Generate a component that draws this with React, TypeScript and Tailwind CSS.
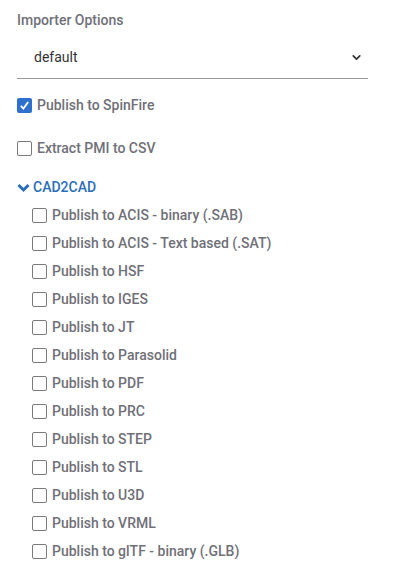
import { ChevronDown } from "lucide-react";

const formats = [
  "Publish to ACIS - binary (.SAB)",
  "Publish to ACIS - Text based (.SAT)",
  "Publish to HSF",
  "Publish to IGES",
  "Publish to JT",
  "Publish to Parasolid",
  "Publish to PDF",
  "Publish to PRC",
  "Publish to STEP",
  "Publish to STL",
  "Publish to U3D",
  "Publish to VRML",
  "Publish to glTF - binary (.GLB)",
];

const Box = ({ checked = false }: { checked?: boolean }) =>
  checked ? (
    <span className="w-[15px] h-[15px] rounded-[2px] bg-[#2f6fce] flex items-center justify-center shrink-0">
      <svg width="11" height="11" viewBox="0 0 12 12" fill="none">
        <path d="M2 6.5 L4.8 9.3 L10 2.2" stroke="white" strokeWidth="2" />
      </svg>
    </span>
  ) : (
    <span className="w-[15px] h-[15px] rounded-[2px] border-[1.5px] border-[#7a7a7a] bg-white shrink-0" />
  );

const Option = ({ label, checked }: { label: string; checked?: boolean }) => (
  <label className="flex items-center gap-[5px] h-[28px]">
    <Box checked={checked} />
    <span>{label}</span>
  </label>
);

export default function App() {
  return (
    <div
      className="w-[412px] h-[569px] bg-white pl-[17px] text-[14px] font-medium text-[#707078] overflow-hidden"
      style={{ fontFamily: "Roboto, sans-serif" }}
    >
      <div className="pt-[11px] h-[31px] leading-[18px]">Importer Options</div>
      <div className="w-[351px] h-[48px] border-b border-[#9a9a9a] flex items-center justify-between pl-[17px] pr-[5px] pt-[6px] mb-[12px]">
        <span className="text-[14px] font-normal text-[#333]">default</span>
        <ChevronDown size={13} strokeWidth={3.2} className="text-[#333]" />
      </div>
      <Option label="Publish to SpinFire" checked />
      <div className="h-[15px]" />
      <Option label="Extract PMI to CSV" />
      <div className="h-[12px]" />
      <div className="flex items-center gap-[3px] h-[27px] text-[#2a6ebb]">
        <svg width="13" height="10" viewBox="0 0 13 10">
          <path d="M1.5 2 L6.5 7 L11.5 2" stroke="#2a6ebb" strokeWidth="3" fill="none" />
        </svg>
        <span>CAD2CAD</span>
      </div>
      <div className="pl-[15px]">
        {formats.map((f) => (
          <Option key={f} label={f} />
        ))}
      </div>
    </div>
  );
}
